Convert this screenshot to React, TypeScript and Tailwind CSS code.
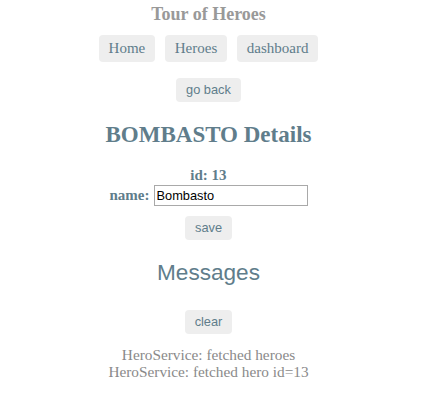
const serif = "font-['Liberation_Serif','Times_New_Roman',serif]";
const sans = "font-['Liberation_Sans',Arial,sans-serif]";

function NavLink({ label }: { label: string }) {
  return (
    <a
      href="#"
      className={`${serif} block h-[27px] rounded-[4px] bg-[#eeeeee] px-[10px] text-[15px] leading-[27px] text-[#607d8b] no-underline`}
    >
      {label}
    </a>
  );
}

function Button({ label }: { label: string }) {
  return (
    <button
      type="button"
      className={`${sans} h-[24px] rounded-[4px] bg-[#eeeeee] px-[10px] text-[12.8px] leading-[24px] text-[#607d8b]`}
    >
      {label}
    </button>
  );
}

export default function App() {
  const messages = ['HeroService: fetched heroes', 'HeroService: fetched hero id=13'];

  return (
    <div className={`${serif} flex w-full flex-col items-center bg-white pr-[5px] text-center`}>
      <h1 className="mt-[4px] text-[18px] font-bold leading-[20px] text-[#999999]">Tour of Heroes</h1>

      <nav className="mt-[11px] flex gap-[9.5px]">
        <NavLink label="Home" />
        <NavLink label="Heroes" />
        <NavLink label="dashboard" />
      </nav>

      <div className="mt-[15px]">
        <Button label="go back" />
      </div>

      <h2 className="mt-[20px] text-[23px] font-bold leading-[26px] text-[#607d8b]">BOMBASTO Details</h2>

      <div className="mt-[19px] text-[15px] font-bold leading-[17.5px] text-[#607d8b]">id: 13</div>
      <div className="flex items-center gap-[4px]">
        <label className="text-[15px] font-bold leading-[17px] text-[#607d8b]">name:</label>
        <input
          defaultValue="Bombasto"
          className={`${sans} h-[21px] w-[154px] border border-[#a9a9a9] px-[2px] text-[12.8px] text-black outline-none`}
        />
      </div>

      <div className="mt-[9px]">
        <Button label="save" />
      </div>

      <h2 className={`${sans} mt-[20px] text-[22.6px] font-normal leading-[26px] text-[#607d8b]`}>Messages</h2>

      <div className="mt-[23px]">
        <Button label="clear" />
      </div>

      <div className="mt-[12px] flex flex-col text-[15.3px] leading-[17.5px] text-[#8a8a8a]">
        {messages.map((m) => (
          <div key={m}>{m}</div>
        ))}
      </div>
    </div>
  );
}
